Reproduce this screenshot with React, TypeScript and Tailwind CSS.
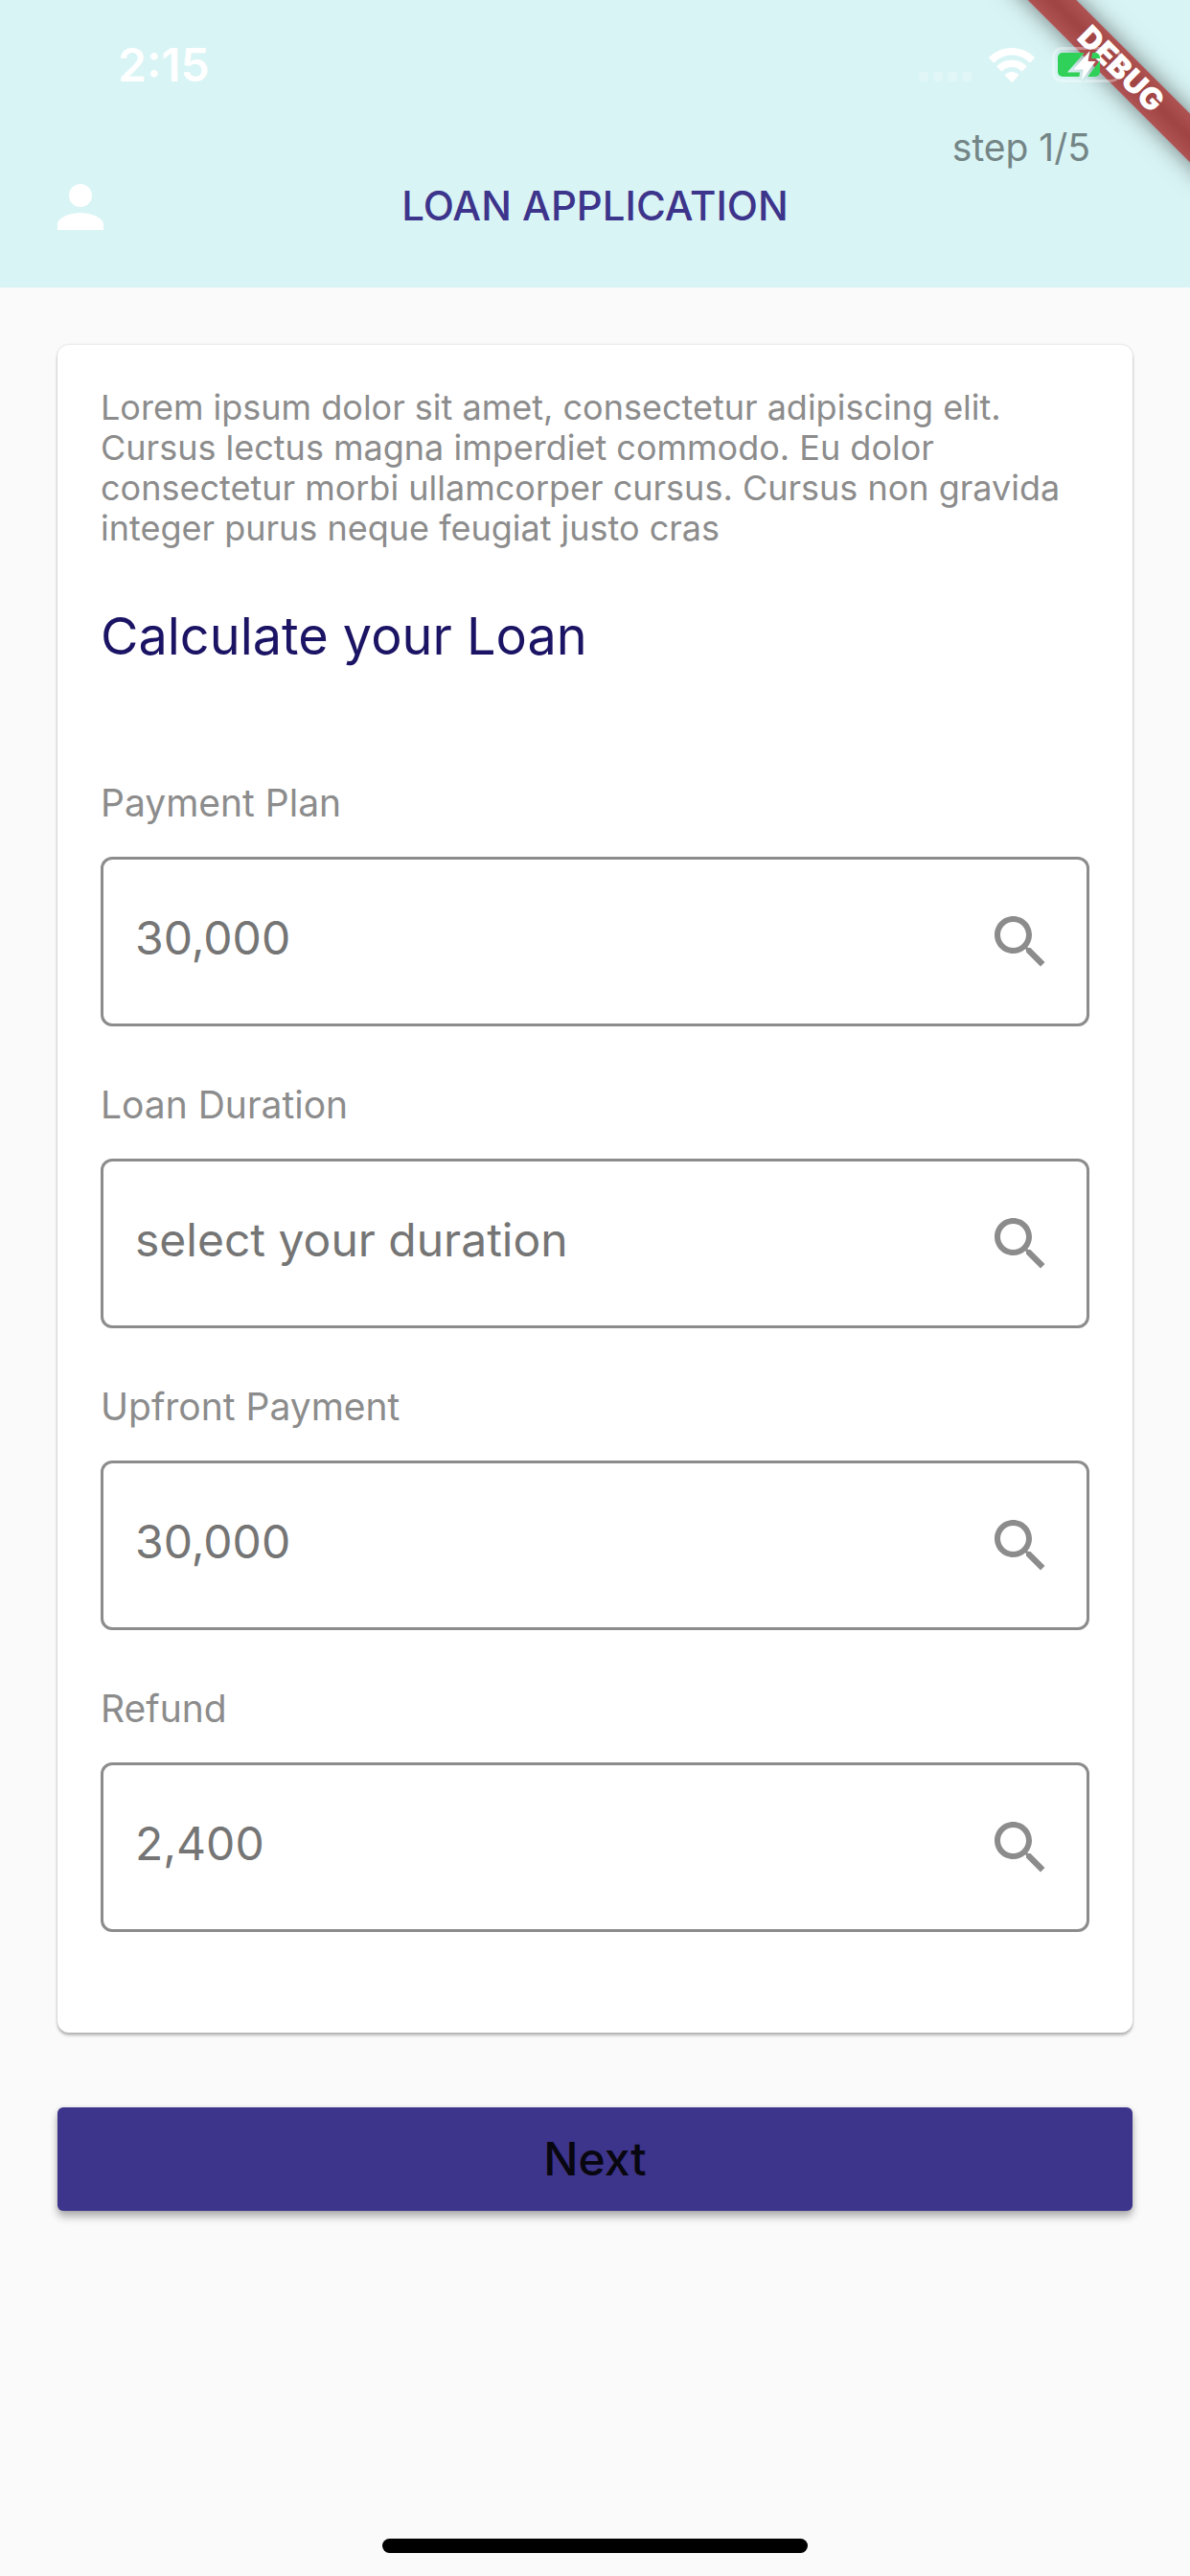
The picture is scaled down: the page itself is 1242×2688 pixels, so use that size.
import { useId } from "react";

const fields = [
  { label: "Payment Plan", placeholder: "30,000" },
  { label: "Loan Duration", placeholder: "select your duration" },
  { label: "Upfront Payment", placeholder: "30,000" },
  { label: "Refund", placeholder: "2,400" },
];

function WifiIcon() {
  return (
    <svg viewBox="0 0 48 36" className="h-9 w-12" fill="white" aria-hidden="true">
      <path d="M24 0C33 0 41.500 3.500 47.500 9.600a1 1 0 0 1 0 1.500L43.500 15a1 1 0 0 1-1.500 0C37 10 31 7.500 24 7.500S11 10 6 15a1 1 0 0 1-1.500 0L.5 11.100a1 1 0 0 1 0-1.500C6.500 3.500 15 0 24 0Z" />
      <path d="M24 12.500c5.700 0 11 2.200 15.200 6a1 1 0 0 1 0 1.500l-4 4a1 1 0 0 1-1.500 0C31 21.500 27.800 20 24 20s-7 1.500-9.700 4a1 1 0 0 1-1.500 0l-4-4a1 1 0 0 1 0-1.500C13 14.700 18.300 12.500 24 12.500Z" />
      <path d="M24 25c2.600 0 5 .9 6.800 2.500a1 1 0 0 1 0 1.500l-6 6.500a1 1 0 0 1-1.500 0l-6-6.500a1 1 0 0 1 0-1.500C19.100 25.900 21.400 25 24 25Z" />
    </svg>
  );
}

const bolt = "M39.500 4 22.500 23.500H32.500L31 34.500 45.500 15H37.500Z";

function BatteryIcon() {
  const maskId = useId();
  return (
    <svg viewBox="0 0 80 38" className="h-[38px] w-20" aria-hidden="true">
      <mask id={maskId} maskUnits="userSpaceOnUse" x="0" y="0" width="80" height="38">
        <rect width="80" height="38" fill="white" />
        <path d={bolt} fill="black" stroke="black" strokeWidth="6" />
      </mask>
      <g mask={`url(#${maskId})`}>
        <rect x="1.500" y="1.500" width="69" height="34" rx="9" fill="none" stroke="white" strokeOpacity="0.35" strokeWidth="3" />
        <path d="M74 13c4 2 4 9 0 11Z" fill="white" fillOpacity="0.35" />
        <rect x="6" y="6" width="44" height="25" rx="5" fill="#30d158" />
      </g>
      <path d={bolt} fill="white" />
    </svg>
  );
}

function PersonIcon() {
  return (
    <svg viewBox="0 0 24 24" className="size-[72px]" fill="white" aria-hidden="true">
      <path d="M12 12c2.210 0 4-1.790 4-4s-1.790-4-4-4-4 1.790-4 4 1.790 4 4 4zm0 2c-2.670 0-8 1.340-8 4v2h16v-2c0-2.660-5.330-4-8-4z" />
    </svg>
  );
}

function SearchIcon() {
  return (
    <svg viewBox="0 0 24 24" className="size-[72px] shrink-0" fill="#8c8c8c" aria-hidden="true">
      <path d="M15.500 14h-.79l-.28-.27C15.410 12.590 16 11.110 16 9.500 16 5.910 13.090 3 9.500 3S3 5.910 3 9.500 5.910 16 9.500 16c1.610 0 3.090-.59 4.230-1.570l.27.28v.79l5 4.990L20.490 19l-4.990-5zm-6 0C7.010 14 5 11.990 5 9.500S7.010 5 9.500 5 14 7.010 14 9.500 11.990 14 9.500 14z" />
    </svg>
  );
}

function DebugBanner() {
  return (
    <div className="pointer-events-none absolute top-0 right-0 size-[220px] overflow-hidden">
      <div className="absolute top-[54px] -right-[78px] flex h-9 w-[300px] rotate-45 items-center justify-center bg-linear-to-b from-[#ae5252] via-[#9f4343] to-[#ae5252] text-[32px] leading-none font-black text-white shadow-[0_0_24px_rgba(0,0,0,0.5)]">
        DEBUG
      </div>
    </div>
  );
}

function StatusBar() {
  return (
    <div className="relative z-10 flex h-[135px] items-center justify-between pr-16 pl-[123px]">
      <time className="text-5xl font-semibold text-white">2:15</time>
      <div className="flex items-center gap-[18px]">
        <div className="mt-6 flex gap-[5px]">
          <span className="size-2.5 rounded-[3px] bg-white/20" />
          <span className="size-2.5 rounded-[3px] bg-white/20" />
          <span className="size-2.5 rounded-[3px] bg-white/20" />
          <span className="size-2.5 rounded-[3px] bg-white/20" />
        </div>
        <WifiIcon />
        <BatteryIcon />
      </div>
    </div>
  );
}

function Field({ label, placeholder }: { label: string; placeholder: string }) {
  const id = useId();
  return (
    <div className="flex flex-col gap-8">
      <label htmlFor={id} className="text-[39px] leading-[48px] text-[#8c8c8c]">
        {label}
      </label>
      <div className="flex h-[177px] items-center rounded-xl border-3 border-[#8c8c8c] px-[33px]">
        <input
          id={id}
          type="text"
          placeholder={placeholder}
          className="h-full min-w-0 flex-1 bg-transparent pb-2 text-5xl text-[#757575] outline-none placeholder:text-[#757575]"
        />
        <SearchIcon />
      </div>
    </div>
  );
}

export default function App() {
  return (
    <div className="relative flex min-h-screen flex-col overflow-hidden bg-[#fafafa] font-['Inter',sans-serif]">
      <DebugBanner />
      <header className="bg-[#d9f4f5] pb-12">
        <StatusBar />
        <div className="grid grid-cols-[1fr_auto_1fr] items-start px-12">
          <button type="button" aria-label="Profile" className="mt-[45px] justify-self-start">
            <PersonIcon />
          </button>
          <h1 className="mt-[45px] text-[42px] leading-[70px] font-medium text-[#3d348b]">LOAN APPLICATION</h1>
          <p className="mr-14 justify-self-end text-[39px] leading-[38px] text-[#748586]">step 1/5</p>
        </div>
      </header>

      <main className="flex flex-col gap-[78px] px-[60px] pt-[60px]">
        <section className="rounded-xl bg-white px-[45px] pt-11 pb-[105px] shadow-[0_3px_3px_rgba(0,0,0,0.25),0_0_3px_rgba(0,0,0,0.15)]">
          <p className="text-[36px] leading-[42px] text-[#8c8c8c]">
            Lorem ipsum dolor sit amet, consectetur adipiscing elit. Cursus lectus magna imperdiet commodo. Eu dolor
            consectetur morbi ullamcorper cursus. Cursus non gravida integer purus neque feugiat justo cras
          </p>
          <h2 className="mt-14 text-[54px] leading-[72px] text-[#1b1464]">Calculate your Loan</h2>
          <form className="mt-[114px] flex flex-col gap-[58px]">
            {fields.map((field) => (
              <Field key={field.label} {...field} />
            ))}
          </form>
        </section>

        <button
          type="button"
          className="h-[108px] rounded-md bg-[#3d348b] text-5xl font-medium text-[#08070f] shadow-[0_6px_8px_rgba(0,0,0,0.3),0_0_4px_rgba(0,0,0,0.12)]"
        >
          Next
        </button>
      </main>

      <div className="mx-auto mt-auto mb-6 h-[15px] w-[444px] rounded-full bg-black" />
    </div>
  );
}
